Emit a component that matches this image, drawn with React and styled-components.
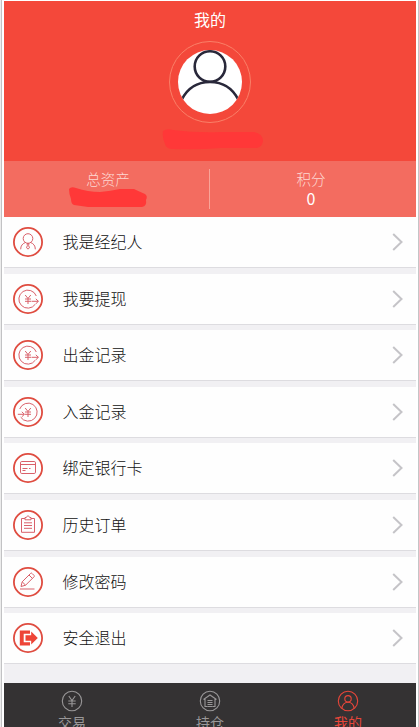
import styled, { createGlobalStyle } from "styled-components";

const GlobalStyle = createGlobalStyle`
    * {
        box-sizing: border-box;
    }
    body {
        margin: 0;
        background-color: #fff;
        font-family: "Noto Sans CJK SC", sans-serif;
    }
`;

const Frame = styled.div`
    width: 419px;
    height: 727px;
    padding: 1px 1px 0 2px;
    border-left: 1px solid #ececec;
    border-right: 1px solid #c4c4c6;
    box-shadow: inset 1px 0 0 #c2c2c4;
    overflow: hidden;
`;

const Container = styled.div`
    display: flex;
    flex-direction: column;
    width: 412px;
    height: 726px;
    margin-left: 1px;
    background-color: #f1f0f3;
    overflow: hidden;
`;

const Header = styled.div`
    display: flex;
    flex-direction: column;
    align-items: center;
    flex: 0 0 160px;
    background-color: #f4483a;
`;

const Title = styled.h1`
    margin: 6px 0 10px;
    font-size: 16px;
    font-weight: 400;
    line-height: 24px;
    color: #fff;
`;

const AvatarRing = styled.div`
    display: flex;
    align-items: center;
    justify-content: center;
    width: 82px;
    height: 82px;
    border: 1px solid #fa8068;
    border-radius: 50%;
`;

const Avatar = styled.svg`
    width: 64px;
    height: 64px;
    border-radius: 50%;
    background-color: #fff;
`;

const HiddenName = styled.svg`
    width: 102px;
    height: 22px;
    margin: 6px 0 0 4px;
`;

const Assets = styled.div`
    display: flex;
    align-items: center;
    flex: 0 0 56px;
    background-color: #f36c60;
`;

const Asset = styled.div`
    display: flex;
    flex-direction: column;
    align-items: center;
    flex: 1;
    height: 40px;
    padding: ${({ $first }) => ($first ? "0 0 0 3px" : "0 4px 0 0")};
    border-right: ${({ $first }) => ($first ? "1px solid #f9a498" : "none")};
`;

const AssetLabel = styled.span`
    font-size: 14.5px;
    font-weight: 300;
    line-height: 20px;
    color: #fdd8d2;
`;

const AssetValue = styled.span`
    margin-top: -1px;
    font-size: 16px;
    line-height: 20px;
    color: #fff;
`;

const HiddenAmount = styled.svg`
    width: 80px;
    height: 22px;
    margin-top: -3px;
`;

const Menu = styled.div`
    display: flex;
    flex-direction: column;
    gap: 5.6px;
    flex: 1;
`;

const Item = styled.div`
    display: flex;
    align-items: center;
    height: 51px;
    padding: 0 13px 0 9px;
    border-bottom: 1px solid #dddce0;
    background-color: #fefefe;
`;

const ItemIcon = styled.svg`
    width: 30px;
    height: 30px;
    fill: none;
    stroke: #d9606a;
    stroke-width: 1;
`;

const ItemText = styled.span`
    flex: 1;
    margin-left: 19.5px;
    padding-bottom: 2px;
    font-size: 16px;
    font-weight: 300;
    line-height: 24px;
    color: #111;
`;

const Arrow = styled.svg`
    width: 11px;
    height: 18px;
    fill: none;
    stroke: #c5c4c8;
    stroke-width: 2;
`;

const TabBar = styled.div`
    display: grid;
    grid-template-columns: 136px 140px 136px;
    flex: 0 0 44px;
    background-color: #343233;
    overflow: hidden;
`;

const Tab = styled.div`
    display: flex;
    flex-direction: column;
    align-items: center;
    padding-top: 7px;
    color: ${({ $active }) => ($active ? "#e8463a" : "#999798")};
`;

const TabIcon = styled.svg`
    flex: none;
    width: 22px;
    height: 22px;
    fill: none;
    stroke: currentColor;
    stroke-width: 1.1;
`;

const TabText = styled.span`
    font-size: 14px;
    line-height: 20px;
`;

const Yen = () => <path d="M12.2 11l2.8 3.5 2.8-3.5M15 14.5V20M12 15h6M12 17.3h6" />;

const Withdraw = () => (
    <>
        <path d="M23.3 12a9 9 0 1 0-1 8.2M18.5 17.3h6.8M22.8 14.8l2.6 2.5-2.6 2.5" />
        <Yen />
    </>
);

const items = [
    {
        text: "我是经纪人",
        icon: (
            <>
                <circle cx="15" cy="11.5" r="4.8" />
                <path d="M12.3 15.5c-3 1.3-4.6 3.2-4.6 6.8M17.7 15.5c3 1.3 4.6 3.2 4.6 6.8M14.1 16.5h1.8l-.3 2 .9 2.3-1.5 1.3-1.5-1.3.9-2.3z" />
            </>
        ),
    },
    { text: "我要提现", icon: <Withdraw /> },
    { text: "出金记录", icon: <Withdraw /> },
    {
        text: "入金记录",
        icon: (
            <>
                <path d="M6.7 12a9 9 0 1 1 1 8.2M4.8 17.3h6.4M8.8 14.8l2.6 2.5-2.6 2.5" />
                <Yen />
            </>
        ),
    },
    {
        text: "绑定银行卡",
        icon: (
            <>
                <rect x="7.5" y="8.5" width="15" height="12" rx="1.3" />
                <path d="M7.5 11.500h15M9.5 15.5h5M9.5 17.5h3M16 15.5h1.5" />
            </>
        ),
    },
    {
        text: "历史订单",
        icon: (
            <>
                <path d="M12 8.5H8.5v13.8h13V8.5H18" />
                <path d="M12 7.5h1.3c.4-2 3-2 3.4 0H18v2.3h-6zM11 12.8h8M11 15.5h8M11 18.3h8" />
            </>
        ),
    },
    {
        text: "修改密码",
        icon: (
            <path d="M8 19.5l1.2-4.7 8.3-8.3c.6-.6 1-.6 1.6 0l1.8 1.8c.6.6.6 1 0 1.6l-8.3 8.3zM9.2 14.8l3.4 3.4M16 8l3.4 3.4M7 22h14.5" />
        ),
    },
    {
        text: "安全退出",
        icon: (
            <>
                <path fill="#ee4437" stroke="none" d="M6.800 7.500H17v3.300h-6.300v8.400H17v3.300H6.800z" />
                <path fill="#ee4437" stroke="none" d="M12.500 12.200h5.700V8.500l6.600 6.500-6.600 6.500v-3.700h-5.700z" />
            </>
        ),
    },
];

const tabs = [
    { text: "交易", icon: <path d="M7.8 6l3.2 4.5L14.2 6M11 10.5V17M7.3 11h7.4M7.3 13.8h7.4" /> },
    {
        text: "持仓",
        icon: (
            <path d="M4.5 9.5L11 5l6.5 4.5M6 9v7.5h2.3M16 9v7.5h-2.3M8.5 10.5h5M8.5 12.5h5M8.5 14.5h5M8.5 16.5h5" />
        ),
    },
    {
        text: "我的",
        active: true,
        icon: (
            <>
                <circle cx="11" cy="8.8" r="3.2" />
                <path d="M4.8 18.5c.6-3.8 2.8-6.3 6.2-6.3s5.6 2.5 6.2 6.3" />
            </>
        ),
    },
];

const App = () => {
    return (
        <>
            <GlobalStyle />
            <Frame>
                <Container>
                    <Header>
                        <Title>我的</Title>
                        <AvatarRing>
                            <Avatar viewBox="0 0 64 64" fill="none" stroke="#29283a" strokeWidth="2.6">
                                <circle cx="32" cy="16.5" r="15.3" />
                                <path d="M3.5 50C9 39 18 32 32 32s23 7 28.500 18" />
                            </Avatar>
                        </AvatarRing>
                        <HiddenName viewBox="0 0 102 22">
                            <path
                                fill="#ff3838"
                                d="M2 2Q6-1 12 1Q35 4 60 3H93Q102 5 102 12Q101 19 95 19H60Q35 21 12 20Q5 20 4 15Q1 9 2 2z"
                            />
                        </HiddenName>
                    </Header>
                    <Assets>
                        <Asset $first>
                            <AssetLabel>总资产</AssetLabel>
                            <HiddenAmount viewBox="0 0 80 22">
                                <path
                                    fill="#ff3838"
                                    d="M1 3Q3 0 8 2Q20 6 32 6Q43 5 52 3H66Q70 5 77 8Q80 10 78 14Q79 20 74 21H20L6 19Q3 18 3 13Q1 8 1 3z"
                                />
                            </HiddenAmount>
                        </Asset>
                        <Asset>
                            <AssetLabel>积分</AssetLabel>
                            <AssetValue>0</AssetValue>
                        </Asset>
                    </Assets>
                    <Menu>
                        {items.map(({ text, icon }) => (
                            <Item key={text}>
                                <ItemIcon viewBox="0 0 30 30">
                                    <circle cx="15" cy="15" r="14.1" stroke="#df4c40" strokeWidth="1.8" />
                                    {icon}
                                </ItemIcon>
                                <ItemText>{text}</ItemText>
                                <Arrow viewBox="0 0 11 18">
                                    <path d="M1.200 1l8.300 8-8.300 8" />
                                </Arrow>
                            </Item>
                        ))}
                    </Menu>
                    <TabBar>
                        {tabs.map(({ text, icon, active }) => (
                            <Tab key={text} $active={active}>
                                <TabIcon viewBox="0 0 22 22">
                                    <circle cx="11" cy="11" r="9.7" />
                                    {icon}
                                </TabIcon>
                                <TabText>{text}</TabText>
                            </Tab>
                        ))}
                    </TabBar>
                </Container>
            </Frame>
        </>
    );
};

export default App;
